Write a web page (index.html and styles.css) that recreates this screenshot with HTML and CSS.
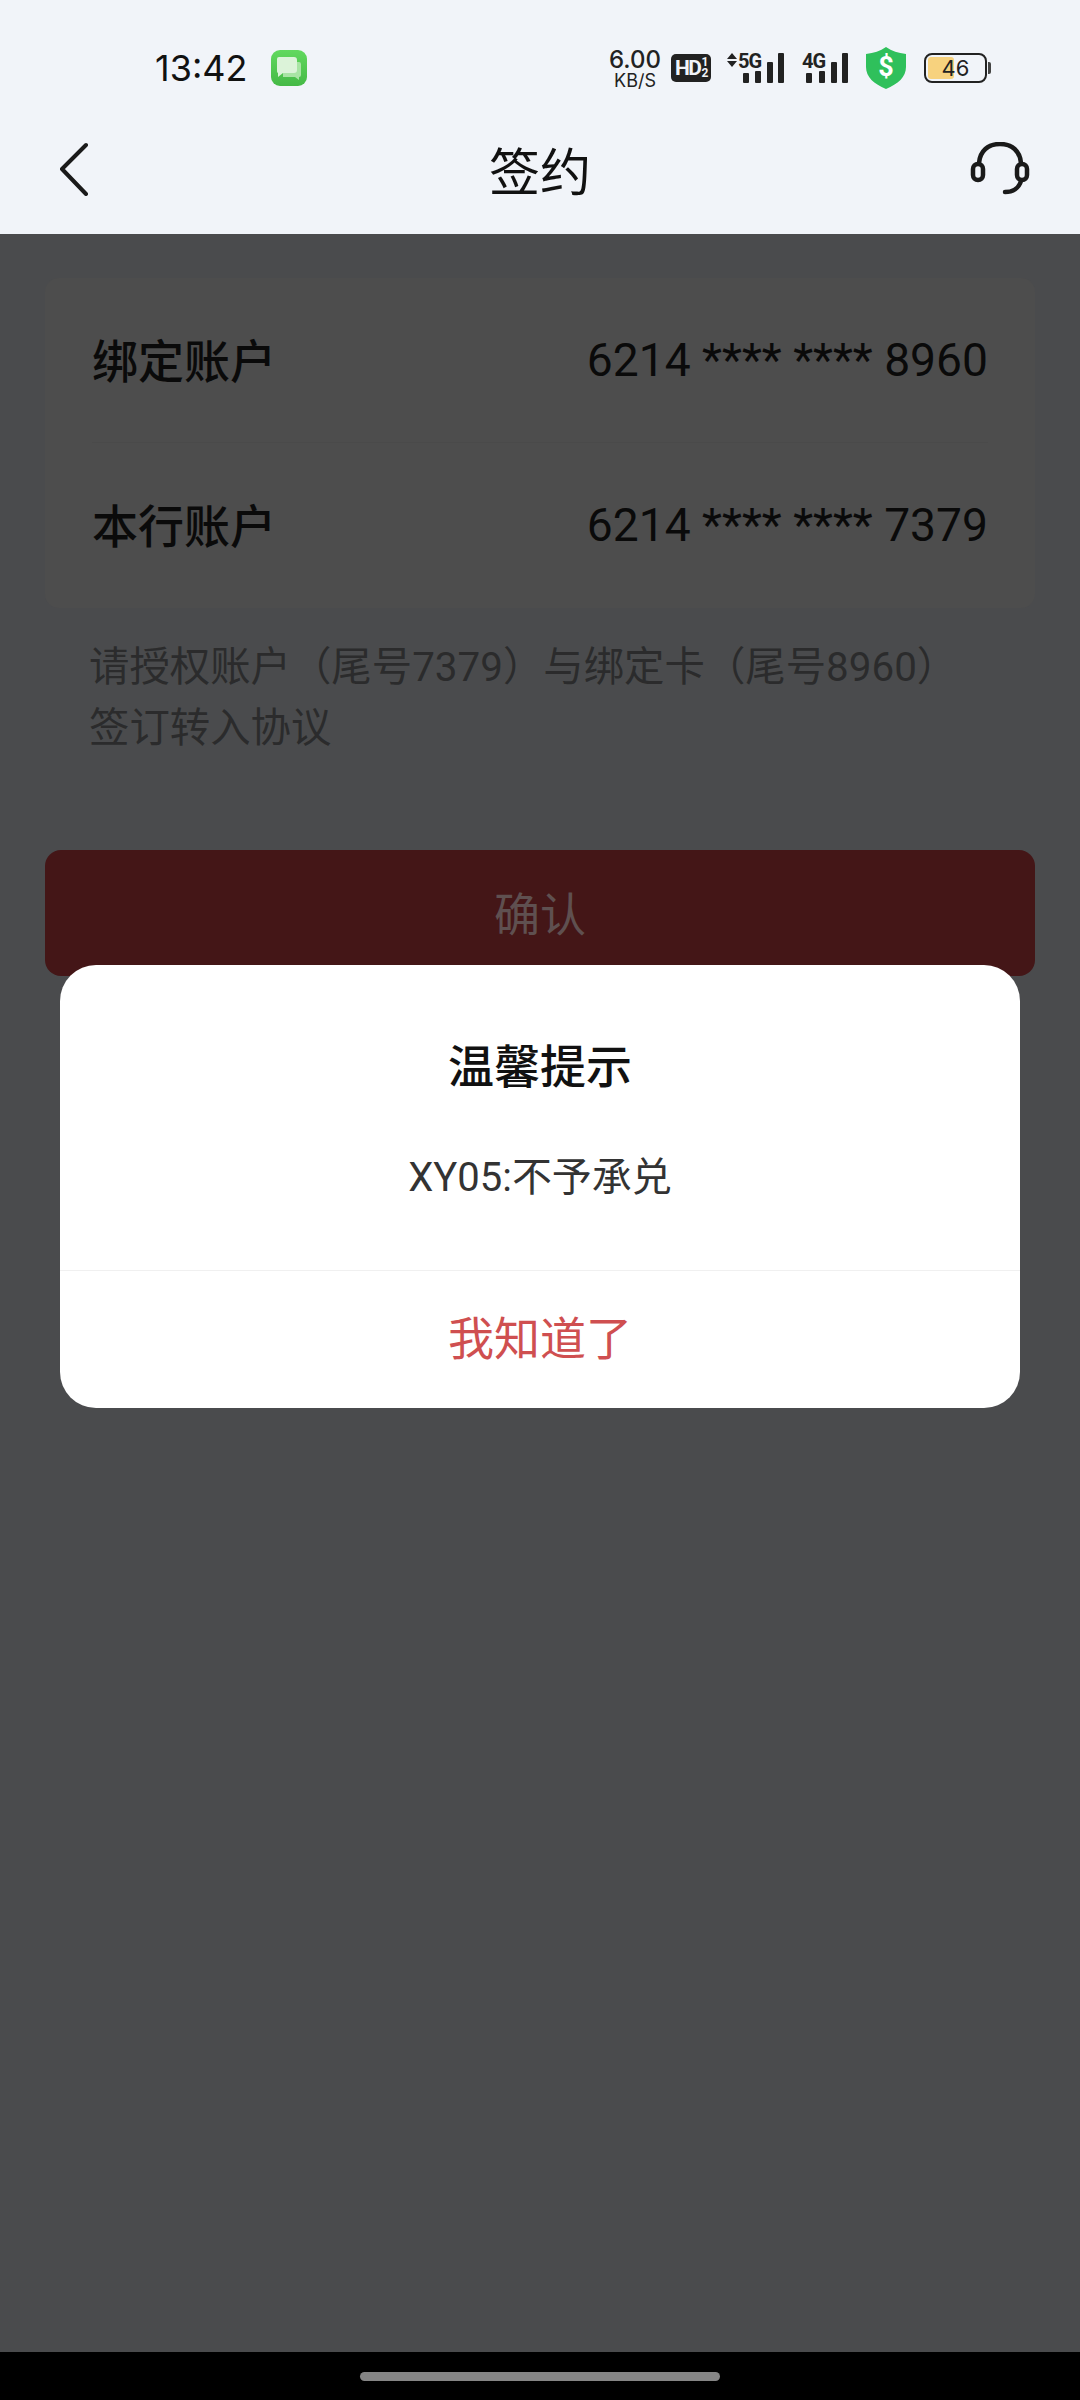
FILE: index.html
```html
<!DOCTYPE html>
<html lang="zh">
<head>
  <meta charset="utf-8">
  <title>签约</title>
  <link rel="stylesheet" href="styles.css">
</head>
<body>
<div class="phone">
  <div class="topbar">
    <div class="status">
      <div class="status-left">
        <span class="clock">13:42</span>
        <svg class="msg-icon" width="36" height="36" viewBox="0 0 36 36">
          <defs>
            <linearGradient id="msgfill" x1="0" y1="0" x2="0" y2="1">
              <stop offset="0" stop-color="#62d95f"/>
              <stop offset="1" stop-color="#45b946"/>
            </linearGradient>
          </defs>
          <rect width="36" height="36" rx="9" fill="url(#msgfill)"/>
          <path d="M12 12h16a2 2 0 0 1 2 2v11a2 2 0 0 1-2 2v3l-4-3H12z" fill="#a8e4a4"/>
          <path d="M8 7h15a3 3 0 0 1 3 3v10a3 3 0 0 1-3 3H12l-5 4v-4a2 2 0 0 1-1-2V9a2 2 0 0 1 2-2z" fill="#dcf3d9"/>
        </svg>
      </div>
      <div class="status-right">
        <div class="speed"><b>6.00</b><span>KB/S</span></div>
        <div class="hd"><span class="hd-text">HD</span><span class="hd-frac">1<br>2</span></div>
        <svg class="signal signal-5g" width="60" height="30" viewBox="0 0 60 30">
          <path d="M1 6l5-6 5 6zM1 8h10l-5 6z" fill="#222"/>
          <text x="12" y="15" class="net-label">5G</text>
          <rect x="17" y="20" width="6" height="10" rx="1" fill="#222"/>
          <rect x="29" y="18" width="6" height="12" rx="1" fill="#222"/>
          <rect x="41" y="9" width="6" height="21" rx="1" fill="#222"/>
          <rect x="52" y="0" width="6" height="30" rx="1" fill="#222"/>
        </svg>
        <svg class="signal signal-4g" width="46" height="30" viewBox="0 0 46 30">
          <text x="0" y="15" class="net-label">4G</text>
          <rect x="4" y="20" width="6" height="10" rx="1" fill="#222"/>
          <rect x="17" y="18" width="6" height="12" rx="1" fill="#222"/>
          <rect x="29" y="9" width="6" height="21" rx="1" fill="#222"/>
          <rect x="40" y="0" width="6" height="30" rx="1" fill="#222"/>
        </svg>
        <svg class="shield" width="40" height="42" viewBox="0 0 40 42">
          <path d="M20 0c6 4 12 6 20 7v13c0 10-8 17-20 22C8 37 0 30 0 20V7c8-1 14-3 20-7z" fill="#2fc05b"/>
          <text x="20" y="29" class="shield-mark">$</text>
        </svg>
        <div class="battery">
          <div class="battery-body"><span class="battery-fill"></span><span class="battery-num">46</span></div>
          <span class="battery-cap"></span>
        </div>
      </div>
    </div>
    <div class="navbar">
      <svg class="back" width="30" height="54" viewBox="0 0 30 54">
        <path d="M27 3L3 27l24 25" fill="none" stroke="#1a1a1a" stroke-width="4" stroke-linecap="round" stroke-linejoin="round"/>
      </svg>
      <h1 class="page-title">签约</h1>
      <svg class="service" width="60" height="54" viewBox="0 0 60 54">
        <path d="M9 21C10 9 18 2 30 2s20 7 21 19" fill="none" stroke="#1a1a1a" stroke-width="4.5"/>
        <rect x="3" y="22" width="10" height="16" rx="5" fill="none" stroke="#1a1a1a" stroke-width="4.5"/>
        <rect x="47" y="22" width="10" height="16" rx="5" fill="none" stroke="#1a1a1a" stroke-width="4.5"/>
        <path d="M51 39c-2 7-8 11-16 11" fill="none" stroke="#1a1a1a" stroke-width="4.5" stroke-linecap="round"/>
      </svg>
    </div>
  </div>

  <div class="content">
    <div class="card">
      <div class="row"><span class="label">绑定账户</span><span class="num">6214 **** **** 8960</span></div>
      <div class="row row-last"><span class="label">本行账户</span><span class="num">6214 **** **** 7379</span></div>
    </div>
    <p class="note">请授权账户（尾号7379）与绑定卡（尾号8960）<br>签订转入协议</p>
    <div class="confirm">确认</div>
  </div>

  <div class="homebar"><span class="home-pill"></span></div>

  <div class="dialog">
    <div class="dialog-body">
      <div class="dialog-title">温馨提示</div>
      <div class="dialog-msg">XY05:不予承兑</div>
    </div>
    <div class="dialog-action">我知道了</div>
  </div>
</div>
</body>
</html>
```

FILE: styles.css
```css
* {
  box-sizing: border-box;
}

body {
  margin: 0;
  font-family: Roboto, "Noto Sans CJK SC", sans-serif;
}

.phone {
  position: relative;
  width: 1080px;
  height: 2400px;
  display: flex;
  flex-direction: column;
  background: #4a4b4d;
  overflow: hidden;
}

.topbar {
  height: 234px;
  background: #f1f4f9;
}

.status {
  height: 116px;
  padding: 46px 89px 0 155px;
  display: flex;
  justify-content: space-between;
  align-items: flex-start;
}

.status-left {
  display: flex;
  align-items: center;
  gap: 24px;
}

.clock {
  font-family: Inter, sans-serif;
  font-size: 36px;
  line-height: 44px;
  color: #111;
}

.status-right {
  display: flex;
  align-items: center;
  height: 44px;
  color: #222;
}

.speed {
  width: 52px;
  margin-right: 10px;
  padding-top: 2px;
  display: flex;
  flex-direction: column;
  align-items: center;
  gap: 3px;
  font-family: Inter, sans-serif;
}

.speed b {
  font-size: 24px;
  font-weight: 500;
  line-height: 20px;
}

.speed span {
  font-size: 18px;
  line-height: 15px;
}

.hd {
  width: 40px;
  height: 28px;
  margin-right: 15px;
  padding-left: 4px;
  display: flex;
  align-items: center;
  gap: 1px;
  background: #222;
  border-radius: 5px;
  color: #f1f4f9;
  font-weight: 700;
}

.hd-text {
  font-size: 21px;
  letter-spacing: -1.5px;
}

.hd-frac {
  font-size: 12px;
  line-height: 11px;
}

.signal {
  overflow: visible;
}

.signal-5g {
  margin-right: 16px;
}

.signal-4g {
  margin-right: 18px;
}

.net-label {
  font-family: Roboto, sans-serif;
  font-size: 20px;
  font-weight: 700;
  letter-spacing: -1px;
  fill: #222;
}

.shield {
  margin-right: 18px;
}

.shield-mark {
  font-family: Roboto, sans-serif;
  font-size: 27px;
  font-weight: 700;
  fill: #fff;
  text-anchor: middle;
}

.battery {
  display: flex;
  align-items: center;
  gap: 1px;
}

.battery-body {
  position: relative;
  width: 63px;
  height: 30px;
  border: 2.5px solid #222;
  border-radius: 8px;
  overflow: hidden;
  display: flex;
  align-items: center;
  justify-content: center;
}

.battery-fill {
  position: absolute;
  left: 2px;
  top: 2px;
  bottom: 2px;
  width: 26px;
  background: #f7d27e;
  border-radius: 3px;
}

.battery-num {
  position: relative;
  font-family: Inter, sans-serif;
  font-size: 22px;
  color: #222;
}

.battery-cap {
  width: 3px;
  height: 12px;
  background: #444;
  border-radius: 0 2px 2px 0;
}

.navbar {
  height: 118px;
  padding: 0 50px 12px;
  display: grid;
  grid-template-columns: 1fr auto 1fr;
  align-items: center;
}

.back {
  margin-left: 9px;
}

.service {
  justify-self: end;
}

.page-title {
  margin: 0;
  font-size: 51px;
  font-weight: 400;
  color: #111;
}

.content {
  flex: 1;
  padding: 44px 45px 0;
}

.card {
  height: 330px;
  padding: 0 47px;
  background: #4d4d4d;
  border-radius: 14px;
}

.row {
  height: 165px;
  padding-bottom: 1px;
  display: flex;
  justify-content: space-between;
  align-items: center;
  border-bottom: 1px solid #4a4a4a;
  color: #0a0a0a;
}

.row-last {
  border-bottom: 0;
}

.label {
  margin-bottom: 4px;
  font-size: 46px;
  font-weight: 500;
}

.num {
  font-size: 46.2px;
}

.note {
  margin: 29px 0 0;
  padding: 0 44px;
  font-size: 40.4px;
  line-height: 61px;
  color: #2b2b2c;
  white-space: nowrap;
}

.confirm {
  height: 126px;
  margin-top: 91px;
  padding-bottom: 4px;
  display: flex;
  justify-content: center;
  align-items: center;
  background: #441617;
  border-radius: 16px;
  font-size: 46px;
  color: #5f5050;
}

.homebar {
  height: 48px;
  display: flex;
  justify-content: center;
  align-items: center;
  background: #000;
}

.home-pill {
  width: 360px;
  height: 9px;
  background: #858585;
  border-radius: 5px;
}

.dialog {
  position: absolute;
  left: 60px;
  top: 965px;
  width: 960px;
  height: 443px;
  background: #fff;
  border-radius: 36px;
}

.dialog-body {
  height: 306px;
  padding-top: 68px;
  border-bottom: 1px solid #f0f0f0;
  text-align: center;
}

.dialog-title {
  font-size: 46px;
  font-weight: 500;
  line-height: 68px;
  color: #111;
}

.dialog-msg {
  margin-top: 47px;
  font-size: 40px;
  line-height: 60px;
  color: #333;
}

.dialog-action {
  height: 137px;
  padding-bottom: 10px;
  display: flex;
  justify-content: center;
  align-items: center;
  font-size: 46px;
  color: #cf4f50;
}
```
